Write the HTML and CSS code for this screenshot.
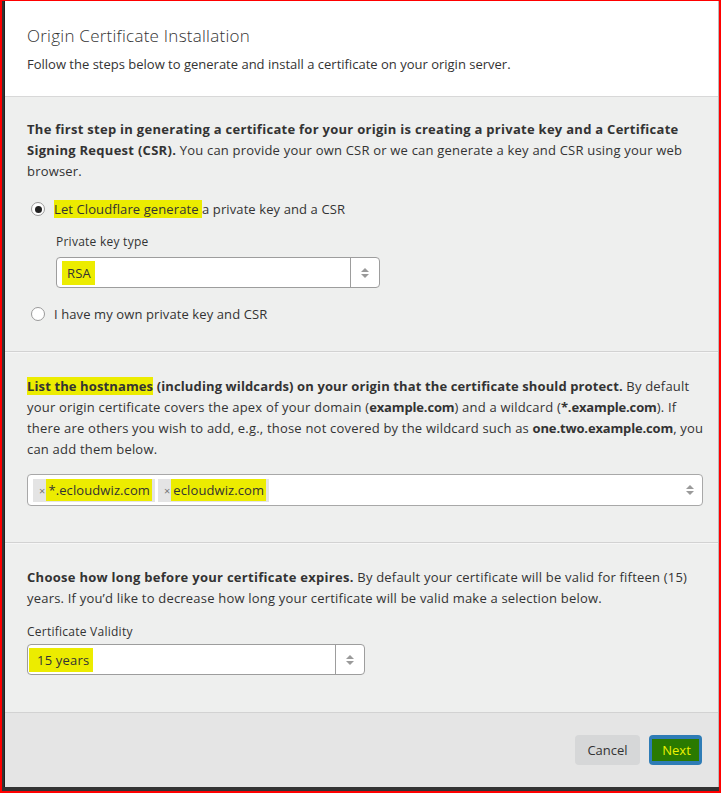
FILE: index.html
```html
<!DOCTYPE html>
<html>
<head>
<meta charset="utf-8">
<link rel="stylesheet" href="styles.css">
</head>
<body>
<div class="screen">
  <div class="modal">
    <div class="header">
      <h1 class="title">Origin Certificate Installation</h1>
      <p class="subtitle">Follow the steps below to generate and install a certificate on your origin server.</p>
    </div>
    <div class="section s1">
      <p class="para"><b>The first step in generating a certificate for your origin is creating a private key and a Certificate Signing Request (CSR).</b> You can provide your own CSR or we can generate a key and CSR using your web browser.</p>
      <div class="radio-row r1">
        <span class="radio checked"></span>
        <span class="radio-label"><span class="hl">Let Cloudflare generate </span>a private key and a CSR</span>
      </div>
      <div class="sub">
        <div class="field-label">Private key type</div>
        <div class="select key-select">
          <span class="select-value"><span class="hl hl-pad">RSA&nbsp;</span></span>
          <span class="select-arrow"><span class="up"></span><span class="down"></span></span>
        </div>
      </div>
      <div class="radio-row r2">
        <span class="radio"></span>
        <span class="radio-label">I have my own private key and CSR</span>
      </div>
    </div>
    <div class="section s2">
      <p class="para"><b class="lead"><span class="hl">List the hostnames</span> (including wildcards) on your origin that the certificate should protect.</b> By default your origin certificate covers the apex of your domain (<b class="inl">example.com</b>) and a wildcard (<b class="inl">*.example.com</b>). If there are others you wish to add, e.g., those not covered by the wildcard such as <b class="inl">one.two.example.com</b>, you can add them below.</p>
      <div class="tags-box">
        <span class="tag"><span class="tag-x">×</span><span class="hl">*.ecloudwiz.com</span></span>
        <span class="tag"><span class="tag-x">×</span><span class="hl">ecloudwiz.com</span></span>
        <span class="tags-arrow"><span class="up"></span><span class="down"></span></span>
      </div>
    </div>
    <div class="section s3">
      <p class="para"><b>Choose how long before your certificate expires.</b> By default your certificate will be valid for fifteen (15) years. If you’d like to decrease how long your certificate will be valid make a selection below.</p>
      <div class="field-label">Certificate Validity</div>
      <div class="select validity-select">
        <span class="select-value"><span class="hl hl-pad2">15 years&nbsp;</span></span>
        <span class="select-arrow"><span class="up"></span><span class="down"></span></span>
      </div>
    </div>
    <div class="footer">
      <button class="btn cancel">Cancel</button>
      <button class="btn next"><span class="next-hl">Next</span></button>
    </div>
  </div>
</div>
</body>
</html>
```
FILE: styles.css
```css
* { box-sizing: border-box; }
html, body { margin: 0; padding: 0; }
body {
  width: 721px;
  height: 793px;
  overflow: hidden;
  font-family: "Open Sans", "DejaVu Sans", sans-serif;
  color: #333;
}
.screen {
  width: 721px;
  height: 793px;
  border-style: solid;
  border-color: #ff0000;
  border-width: 1px 2px 2px 2px;
  background: #333;
  padding: 0 0 4px 2px;
  display: flex;
}
.modal {
  flex: 1;
  display: flex;
  flex-direction: column;
  background: #eeefee;
  border-left: 1px solid #1e1e1e;
  border-right: 1px solid #bbb;
}
.header {
  background: #fff;
  height: 96px;
  border-bottom: 1px solid #d8d8d8;
  padding: 23px 0 0 22px;
}
.title {
  margin: 0;
  font-weight: 300;
  font-size: 17px;
  letter-spacing: 0.25px;
  line-height: 24px;
  color: #333;
}
.subtitle {
  margin: 7px 0 0;
  font-size: 13px;
  line-height: 18px;
  color: #333;
}
.section {
  padding-left: 22px;
  padding-right: 12px;
  border-bottom: 1px solid #d2d2d2;
  box-shadow: 0 1px 0 #f6f6f6;
}
.para {
  margin: 0;
  font-size: 13px;
  letter-spacing: 0.2px;
  line-height: 21px;
  color: #333;
}
.para b { font-weight: 700; letter-spacing: 0.28px; }
.para b.lead { letter-spacing: 0.12px; }
.para b.inl { letter-spacing: -0.15px; }
.hl { background: #ecec00; }
.s1 { height: 255px; padding-top: 22px; }
.s2 { height: 191px; padding-top: 24px; }
.s3 { height: 170px; padding-top: 24px; }
.radio-row {
  display: flex;
  align-items: center;
  gap: 9px;
  padding-left: 4px;
  font-size: 13px;
  letter-spacing: 0.1px;
  line-height: 20px;
}
.r1 { margin-top: 17px; }
.r2 { margin-top: 16px; }
.radio {
  width: 14px;
  height: 14px;
  border-radius: 50%;
  border: 1px solid #9a9a9a;
  background: #fff;
  display: flex;
  align-items: center;
  justify-content: center;
}
.radio.checked::after {
  content: "";
  width: 7px;
  height: 7px;
  border-radius: 50%;
  background: #222;
}
.sub { padding-left: 29px; margin-top: 14px; }
.field-label {
  font-size: 12px;
  letter-spacing: 0.25px;
  line-height: 18px;
  color: #333;
}
.select {
  display: flex;
  background: #fff;
  border: 1px solid #9d9d9d;
  border-radius: 4px;
  height: 31px;
  margin-top: 6px;
}
.key-select { width: 324px; }
.validity-select { width: 338px; margin-top: 3px; }
.s3 .field-label { margin-top: 14px; }
.select-value {
  flex: 1;
  display: flex;
  align-items: center;
  padding-left: 5px;
  font-size: 13px;
  letter-spacing: 0.2px;
}
.hl-pad { padding: 3px 0 3px 5px; }
.hl-pad2 { padding: 3px 0 3px 8px; margin-left: -4px; }
.select-arrow {
  width: 29px;
  border-left: 1px solid #9d9d9d;
  display: flex;
  flex-direction: column;
  align-items: center;
  justify-content: center;
  gap: 2px;
}
.up, .down {
  width: 0;
  height: 0;
  border-left: 4px solid transparent;
  border-right: 4px solid transparent;
}
.up { border-bottom: 4px solid #9a9a9a; }
.down { border-top: 4px solid #9a9a9a; }
.tags-box {
  margin-top: 14px;
  width: 676px;
  height: 32px;
  background: #fff;
  border: 1px solid #a8a8a8;
  border-radius: 4px;
  display: flex;
  align-items: center;
  gap: 3px;
  padding-left: 5px;
  padding-right: 8px;
}
.tag {
  background: #e4e4e4;
  height: 23px;
  display: flex;
  align-items: center;
  padding: 0 3px 0 6px;
  font-size: 13px;
  letter-spacing: 0.1px;
}
.tag .hl { padding: 2px 2px; }
.tag-x {
  font-size: 11px;
  color: #777;
  margin-right: 1px;
}
.tags-arrow {
  margin-left: auto;
  display: flex;
  flex-direction: column;
  gap: 2px;
}
.footer {
  flex: 1;
  background: #e5e5e5;
  display: flex;
  justify-content: flex-end;
  align-items: flex-start;
  gap: 9px;
  padding: 22px 16px 0 0;
}
.btn {
  height: 30px;
  border: none;
  border-radius: 4px;
  font-family: "Open Sans", "DejaVu Sans", sans-serif;
  font-size: 13px;
  padding: 0;
}
.cancel {
  width: 65px;
  background: #d6d7d8;
  color: #333;
}
.next {
  width: 53px;
  background: #2e7cb6;
  display: flex;
  align-items: center;
  justify-content: center;
}
.next-hl {
  background: #2a7a00;
  color: #ecf200;
  padding: 2px 8px 2px 10px;
  line-height: 18px;
}
```
